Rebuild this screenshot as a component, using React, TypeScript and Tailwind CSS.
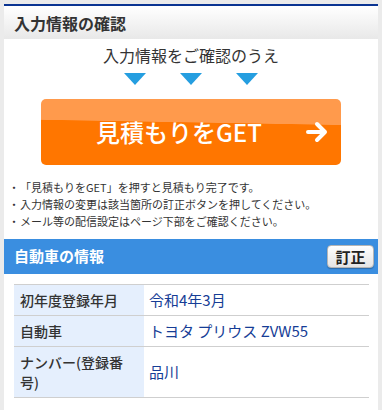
import React from "react";

const rows = [
  { label: "初年度登録年月", value: "令和4年3月" },
  { label: "自動車", value: "トヨタ プリウス ZVW55" },
  { label: "ナンバー(登録番号)", value: "品川" },
];

const notes = [
  "「見積もりをGET」を押すと見積もり完了です。",
  "入力情報の変更は該当箇所の訂正ボタンを押してください。",
  "メール等の配信設定はページ下部をご確認ください。",
];

export default function App() {
  return (
    <div
      className="min-h-screen bg-[#ebebeb] px-1 pt-1 text-[#333]"
      style={{ fontFamily: '"Noto Sans CJK JP", "Noto Sans", sans-serif' }}
    >
      <div className="min-h-[406px] border-t-2 border-[#0a3492] bg-white">
        {/* Page header */}
        <div className="flex h-[33px] items-center bg-gradient-to-b from-white to-[#e8e8e8] px-[10px]">
          <h1 className="text-[16px] font-bold leading-none text-[#333]">
            入力情報の確認
          </h1>
        </div>

        {/* Lead */}
        <p className="mt-[6px] text-center text-[16px] leading-[20px] text-[#333]">
          入力情報をご確認のうえ
        </p>
        <div className="mt-[8px] flex justify-center gap-[34px]">
          {[0, 1, 2].map((i) => (
            <span
              key={i}
              className="h-0 w-0 border-x-[11px] border-t-[12px] border-x-transparent border-t-[#259ee0]"
            />
          ))}
        </div>

        {/* GET button */}
        <button className="mx-auto mt-[14px] flex h-[66px] w-[300px] items-center rounded-[5px] bg-[linear-gradient(181deg,#ff9a4c_0%,#ff9a4c_36%,#ff7600_37%,#ff7600_100%)] pl-[55px] pr-[12px] text-white">
          <span className="text-[24px] font-medium leading-none">見積もりをGET</span>
          <svg
            viewBox="0 0 24 22"
            className="ml-auto h-[22px] w-[24px]"
            fill="none"
            stroke="white"
            strokeWidth="4"
            strokeLinecap="round"
            strokeLinejoin="round"
          >
            <path d="M3 11h17M12 3l8 8-8 8" />
          </svg>
        </button>

        {/* Notes */}
        <ul className="mt-[14px] px-1 text-[11px] leading-[17px] text-[#333]">
          {notes.map((n) => (
            <li key={n} className="flex">
              <span className="w-[12px] shrink-0 text-center">・</span>
              <span>{n}</span>
            </li>
          ))}
        </ul>

        {/* Car info */}
        <div className="mt-[9px] flex h-[35px] items-center justify-between bg-[#3a8ee0] pl-[10px] pr-[4px]">
          <h2 className="text-[15px] font-bold text-white">自動車の情報</h2>
          <button className="h-[23px] w-[47px] rounded-[4px] border border-[#b5b5b5] bg-gradient-to-b from-white to-[#e4e4e4] text-[15px] font-bold leading-none text-[#222] shadow-[0_1px_1px_rgba(0,0,0,0.25)]">
            訂正
          </button>
        </div>

        <div className="mx-[10px] mt-[10px] mr-[9px]">
          <table className="w-full border-collapse">
            <tbody>
              {rows.map((r) => (
                <tr key={r.label} className="border-y border-[#cfcfcf]">
                  <th className="w-[130px] bg-[#e5effd] px-[6px] py-[5px] text-left align-middle text-[14px] font-medium leading-[20px] text-[#333]">
                    {r.label}
                  </th>
                  <td className="px-[5px] py-[5px] align-middle text-[15px] leading-[20px] text-[#163d96]">
                    {r.value}
                  </td>
                </tr>
              ))}
            </tbody>
          </table>
        </div>
      </div>
    </div>
  );
}
